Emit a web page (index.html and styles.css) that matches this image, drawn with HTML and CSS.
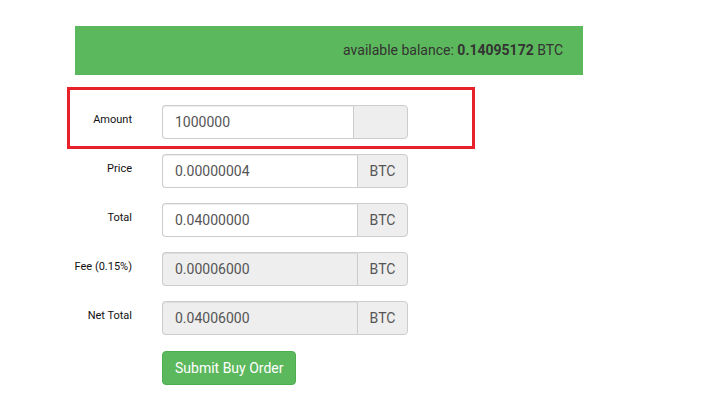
FILE: index.html
```html
<!DOCTYPE html>
<html lang="en">
<head>
  <meta charset="UTF-8" />
  <meta name="viewport" content="width=device-width, initial-scale=1.0" />
  <title>Buy order</title>
  <link rel="stylesheet" href="styles.css">
</head>
<body>
  <div class="trade">
    <div class="balance">
      available balance: <strong>0.14095172</strong> BTC
    </div>

    <form class="order-form" onsubmit="return false">
      <div class="form-row highlighted">
        <label class="control-label">Amount</label>
        <div class="input-group">
          <input type="text" class="form-control" value="1000000" />
          <span class="addon addon-empty"></span>
        </div>
        <div class="highlight-box"></div>
      </div>

      <div class="form-row">
        <label class="control-label">Price</label>
        <div class="input-group">
          <input type="text" class="form-control" value="0.00000004" />
          <span class="addon">BTC</span>
        </div>
      </div>

      <div class="form-row">
        <label class="control-label">Total</label>
        <div class="input-group">
          <input type="text" class="form-control" value="0.04000000" />
          <span class="addon">BTC</span>
        </div>
      </div>

      <div class="form-row">
        <label class="control-label">Fee (0.15%)</label>
        <div class="input-group">
          <input type="text" class="form-control" value="0.00006000" disabled />
          <span class="addon">BTC</span>
        </div>
      </div>

      <div class="form-row">
        <label class="control-label">Net Total</label>
        <div class="input-group">
          <input type="text" class="form-control" value="0.04006000" disabled />
          <span class="addon">BTC</span>
        </div>
      </div>

      <div class="form-row">
        <span class="control-label"></span>
        <button class="btn btn-success" type="submit">Submit Buy Order</button>
      </div>
    </form>
  </div>
</body>
</html>
```

FILE: styles.css
```css
body {
  margin: 0;
  font-family: Roboto, "Liberation Sans", sans-serif;
  font-size: 14px;
  color: #333;
  background: #fff;
}
.trade {
  padding: 26px 0 0 75px;
  width: 508px;
}
.balance {
  background: #5cb85c;
  height: 49px;
  line-height: 49px;
  text-align: right;
  padding-right: 20px;
  color: #333;
}
.balance strong {
  font-weight: 700;
}
.order-form {
  margin-top: 30px;
}
.form-row {
  position: relative;
  display: flex;
  align-items: flex-start;
  margin-bottom: 15px;
}
.control-label {
  flex: none;
  display: flex;
  justify-content: flex-end;
  width: 57px;
  padding-right: 30px;
  white-space: nowrap;
  font-size: 11px;
  font-weight: 400;
  color: #111;
  padding-top: 8px;
}
.input-group {
  display: flex;
  width: 246px;
  height: 34px;
}
.form-control {
  flex: 1;
  min-width: 0;
  box-sizing: border-box;
  height: 34px;
  margin: 0;
  padding: 6px 12px;
  font-family: inherit;
  font-size: 14px;
  color: #555;
  background: #fff;
  border: 1px solid #ccc;
  border-right: 0;
  border-radius: 4px 0 0 4px;
  box-shadow: inset 0 1px 1px rgba(0, 0, 0, 0.075);
}
.form-control:disabled {
  background: #eee;
}
.addon {
  box-sizing: border-box;
  width: 51px;
  height: 34px;
  line-height: 32px;
  text-align: center;
  color: #555;
  background: #eee;
  border: 1px solid #ccc;
  border-radius: 0 4px 4px 0;
}
.addon-empty {
  width: 55px;
}
.highlight-box {
  position: absolute;
  left: -8px;
  top: -18px;
  width: 402px;
  height: 56px;
  border: 3px solid #e8202a;
}
.btn {
  box-sizing: border-box;
  height: 34px;
  padding: 6px 12px;
  font-family: inherit;
  font-size: 14px;
  border-radius: 4px;
  cursor: pointer;
}
.btn-success {
  color: #fff;
  background: #5cb85c;
  border: 1px solid #4cae4c;
  margin-top: 1px;
}
```
